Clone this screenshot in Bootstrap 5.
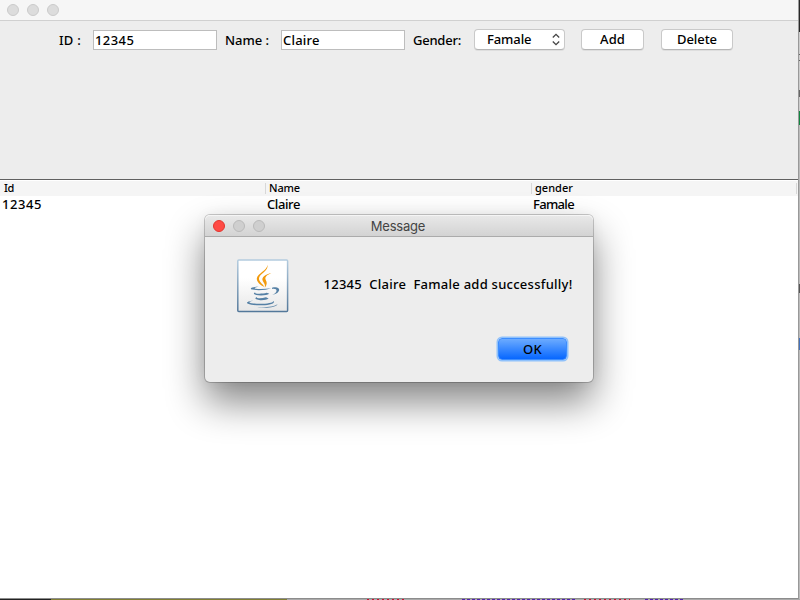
<!DOCTYPE html>
<html lang="en">
<head>
<meta charset="utf-8">
<title>Message</title>
<link href="https://cdn.jsdelivr.net/npm/bootstrap@5.3.0/dist/css/bootstrap.min.css" rel="stylesheet">
<style>
body{width:800px;height:600px;font:500 13px/20px "Noto Sans",sans-serif;color:#000;background:#a9a9a9}
.app-window{width:799px;height:599px;background:#fff;border-right:1px solid #999;border-bottom:1px solid #8c8c8c}
.app-title{height:21px;background:#f6f6f6;border-bottom:1px solid #d0d0d0;padding-left:7px;gap:8px}
.light{width:12px;height:12px;border-radius:50%;background:#dcdcdc;border:1px solid #cbcbcb}
.form-area{height:158px;background:#ededed;padding:8px 0 0 59px}
.form-area .caption{height:20px;margin-top:1px}
.field{width:124px;height:20px;margin-top:1px;padding:0 1px;border:1px solid #bdbdbd;border-radius:0;background:#fff;font-size:13px;font-weight:500;line-height:18px;color:#000;min-height:0}
.field-id{letter-spacing:.42px}
.field-name{letter-spacing:.2px}
.mac-btn{height:21px;background:#fff;border:1px solid #c9c9c9;border-bottom-color:#b5b5b5;border-radius:4px;padding:0;font:500 13px/19px "Noto Sans",sans-serif;color:#000;box-shadow:0 1px 0 #dedede}
.gender-select{width:91px;padding:0 4px 0 12px}
.grid-head{height:17px;border-top:1px solid #606060;background:linear-gradient(#fff 1px,#f5f5f5 1px);font-size:11px;line-height:16px}
.grid-head>div{width:266px;padding-left:3px;position:relative}
.grid-head>div:first-child{padding-left:4px}
.grid-head>div::after{content:"";position:absolute;right:0;top:3px;height:11px;width:1px;background:#d8d8d8}
.grid-head>div:last-child{width:265px}
.grid-row{line-height:17px}
.grid-row>div{width:266px;padding-left:1px}
.grid-row>div:first-child{padding-left:2px}
.dialog{position:absolute;left:205px;top:215px;width:388px;height:167px;background:#ededed;border-radius:5px;box-shadow:0 0 0 1px rgba(0,0,0,.2),0 20px 38px rgba(0,0,0,.48),0 0 14px rgba(0,0,0,.05)}
.dialog-title{height:22px;border-radius:5px 5px 0 0;background:linear-gradient(#e9e9e9,#d3d3d3);border-bottom:1px solid #ababab;box-shadow:inset 0 1px #f5f5f5;font:13px/22px Inter,sans-serif;color:#444;padding-left:8px;gap:8px}
.dialog-title .caption{left:-1px}
.dialog .light{background:#cfcfcf;border-color:#bababa}
.dialog .light.close-light{background:#ff4b45;border-color:#e2352f}
.dialog-body{padding:22px 0 0 31px}
.message{margin:15px 0 0 33.5px;white-space:pre}
.dialog-actions{padding:24px 26px 0 0}
.ok-btn{width:69px;height:22px;border:1px solid #3c8dff;border-radius:4px;background:linear-gradient(#6cabff,#0767ff);box-shadow:0 0 0 1.5px #8fc1fb;padding:0;font:500 13px/20px "Noto Sans",sans-serif;color:#000}
.strip-right{position:absolute;left:799px;top:0;width:1px;height:599px;background:linear-gradient(#292929 0 32px,#ccc 32px 54px,#666 54px 55px,#ccc 55px 60px,#666 60px 61px,#ccc 61px 90px,#666 90px 97px,#ccc 97px 111px,#118640 111px 125px,#bbb 125px 284px,#555 284px 293px,#bbb 293px 338px,#4371bd 338px 350px,#bbb 350px)}
.strip-bottom{position:absolute;left:0;top:599px;width:800px;height:1px;background:linear-gradient(90deg,#222 0 51px,#817e33 51px 287px,#aaa 287px)}
.code{position:absolute;top:0;height:1px}
.code-red{background:repeating-linear-gradient(90deg,#c13 0 2px,#aaa 2px 5px)}
.code-blue{background:repeating-linear-gradient(90deg,#5122ae 0 3px,#aaa 3px 5px)}
</style>
<script src="https://cdn.jsdelivr.net/npm/bootstrap@5.3.0/dist/js/bootstrap.bundle.min.js"></script>
</head>
<body class="overflow-hidden position-relative">
<main class="app-window">
  <header class="app-title d-flex align-items-center"><span class="light"></span><span class="light"></span><span class="light"></span></header>
  <form class="form-area d-flex align-items-start text-nowrap">
    <label class="caption" for="fid" style="width:34px"><span class="fit" data-w="22">ID :</span></label>
    <input class="field field-id form-control" id="fid" value="12345">
    <label class="caption" for="fname" style="width:56px;margin-left:8px"><span class="fit" data-w="44">Name :</span></label>
    <input class="field field-name form-control" id="fname" value="Claire">
    <span class="caption" style="width:61px;margin-left:8px"><span class="fit" data-w="48">Gender:</span></span>
    <button type="button" class="btn mac-btn gender-select d-flex justify-content-between"><span class="fit" data-w="44.5">Famale</span>
      <svg width="8" height="13" viewBox="0 0 8 13" style="margin-top:3px" fill="none" stroke="#444" stroke-width="1.3"><path d="M.8 4.5 4 1.3 7.2 4.5M.8 8.5 4 11.7 7.2 8.5"/></svg></button>
    <button type="button" class="btn mac-btn" style="width:63px;margin-left:16px"><span class="fit" data-w="25">Add</span></button>
    <button type="button" class="btn mac-btn" style="width:72px;margin-left:17px"><span class="fit" data-w="40">Delete</span></button>
  </form>
  <section>
    <div class="grid-head d-flex"><div><span class="fit" data-w="10">Id</span></div><div><span class="fit" data-w="31">Name</span></div><div><span class="fit" data-w="38">gender</span></div></div>
    <div class="grid-row d-flex"><div><span class="fit" data-w="40">12345</span></div><div><span class="fit" data-w="33">Claire</span></div><div><span class="fit" data-w="41">Famale</span></div></div>
  </section>
</main>
<section class="dialog" role="dialog">
  <header class="dialog-title d-flex align-items-center position-relative"><span class="light close-light"></span><span class="light"></span><span class="light"></span><span class="caption position-absolute w-100 text-center"><span class="fit" data-w="54.5">Message</span></span></header>
  <div class="dialog-body d-flex">
    <svg width="54" height="55" viewBox="0 0 54 55" fill="none">
      <defs><linearGradient id="edge" x2="0" y2="1"><stop stop-color="#b4ccdf"/><stop offset="1" stop-color="#53789a"/></linearGradient><linearGradient id="face" x2="0" y2="1"><stop offset=".35" stop-color="#fff"/><stop offset="1" stop-color="#e7e7e7"/></linearGradient></defs>
      <rect x="1.8" y=".9" width="49.8" height="51.6" rx="1" fill="url(#face)" stroke="url(#edge)" stroke-width="1.5"/>
      <g transform="translate(0 -.5)">
      <g fill="#f29a0c"><path d="M31.3 6.2C33.5 12.2 22.7 15.2 23 20.2C23.2 23.5 26.8 25.3 28.5 28.5C24.5 26.8 20.6 23.6 20.8 20C21.1 14.7 31.9 12 31.3 6.2Z"/><path d="M35.3 14.8C30.1 16.7 28.5 19 29.8 21.6C31.4 24.2 30.9 26.5 28.8 29.3C29.6 26 28 24.5 26.8 22.5C24.9 18.8 30 15.3 35.3 14.8Z"/></g>
      <g fill="#5580a5"><path d="M22.5 28C16 28.6 12.5 30.2 16.5 31.1C22 32.3 31 31.5 35 29.7C30 30.5 24 30.8 19.5 30.2C17.5 29.8 19.5 28.8 22.5 28Z"/><path d="M19.5 33.8C15.5 35.4 19.5 36.9 25 36.9C29 36.9 31.6 36.2 33.3 35.3L30.8 34.3C27.5 35.2 22.5 35.4 19.9 34.9C18.8 34.6 19 34.2 19.5 33.8Z"/><path d="M21 38.4C17.3 39.8 20.5 41.7 25.5 41.7C28.8 41.7 31 41 32.6 40L30 38.8C27 39.8 23.5 40 21.5 39.6C20.6 39.3 20.6 38.9 21 38.4Z"/><path d="M36 29.2C44.5 26.8 46.5 33.8 36.4 36.6C42 33.8 42 29.6 36 30.4Z"/><path d="M17.5 42C9.5 42.9 8.6 45.3 15.5 46.3C23.5 47.5 41 46.9 37.5 42.4C37.3 44.6 27 45.9 17.5 45C11.5 44.4 12.5 43.1 17.5 42Z"/><path d="M21.2 48.6C29.5 50.2 40.5 49 41.6 45.5C38.8 48 31 49 21.2 48.6Z"/></g>
      </g>
    </svg>
    <p class="message mb-0"><span class="fit" data-w="249">12345  Claire  Famale add successfully!</span></p>
  </div>
  <div class="dialog-actions d-flex justify-content-end"><button type="button" class="btn ok-btn"><span class="fit" data-w="19">OK</span></button></div>
</section>
<div class="strip-right"></div>
<div class="strip-bottom"><i class="code code-red" style="left:367px;width:38px"></i><i class="code code-blue" style="left:462px;width:114px"></i><i class="code code-red" style="left:584px;width:46px"></i><i class="code code-blue" style="left:645px;width:40px"></i></div>
<script>
// Spread each label's letters to its nominal width
document.querySelectorAll('.fit').forEach(function(s){
  var w=s.getBoundingClientRect().width;
  s.style.letterSpacing=((s.dataset.w-w)/s.textContent.length)+'px';
});
</script>
</body>
</html>
